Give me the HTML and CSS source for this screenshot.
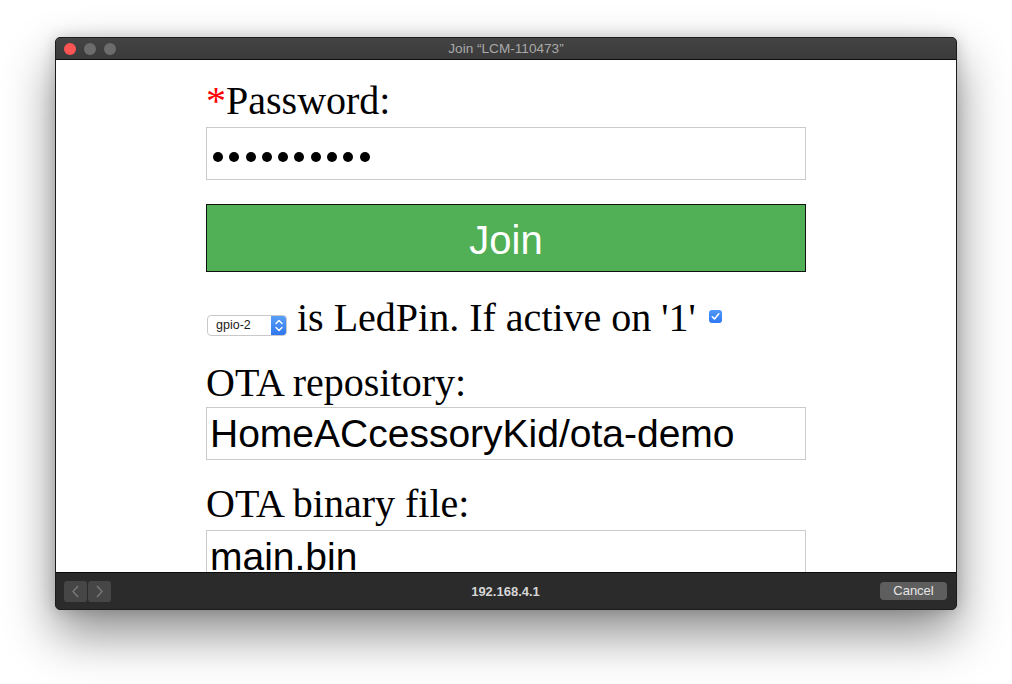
FILE: index.html
```html
<!DOCTYPE html>
<html>
<head>
<meta charset="utf-8">
<title>Join</title>
<link rel="stylesheet" href="styles.css">
</head>
<body>
<div class="window">
  <div class="titlebar">
    <div class="lights">
      <span class="light red"></span>
      <span class="light"></span>
      <span class="light"></span>
    </div>
    <div class="title">Join “LCM-110473”</div>
    <div></div>
  </div>
  <div class="viewport">
    <div class="form">
      <div class="label"><span class="req">*</span>Password:</div>
      <div class="field password">
        <span class="dot"></span><span class="dot"></span><span class="dot"></span><span class="dot"></span><span class="dot"></span><span class="dot"></span><span class="dot"></span><span class="dot"></span><span class="dot"></span><span class="dot"></span>
      </div>
      <div class="join">Join</div>
      <div class="ledrow"><span class="select"><span class="select-text">gpio-2</span><span class="select-arrow"><svg width="16" height="21" viewBox="0 0 16 21"><path d="M5 8.5 L8 5.5 L11 8.5 M5 12.5 L8 15.5 L11 12.5" fill="none" stroke="#fff" stroke-width="1.4" stroke-linecap="round" stroke-linejoin="round"/></svg></span></span> is LedPin. If active on '1' <span class="check"><svg width="13" height="13" viewBox="0 0 13 13"><path d="M3.3 6.8 L5.5 9 L9.8 3.8" fill="none" stroke="#fff" stroke-width="1.6" stroke-linecap="round" stroke-linejoin="round"/></svg></span></div>
      <div class="label gap-repo">OTA repository:</div>
      <div class="field">HomeACcessoryKid/ota-demo</div>
      <div class="label gap-bin">OTA binary file:</div>
      <div class="field">main.bin</div>
    </div>
  </div>
  <div class="bottombar">
    <div class="nav">
      <span class="navbtn"><svg width="23" height="21" viewBox="0 0 23 21"><path d="M14 5 L9 10.5 L14 16" fill="none" stroke="#7a7a7a" stroke-width="1.3"/></svg></span>
      <span class="navbtn"><svg width="23" height="21" viewBox="0 0 23 21"><path d="M9 5 L14 10.5 L9 16" fill="none" stroke="#7a7a7a" stroke-width="1.3"/></svg></span>
    </div>
    <div class="url">192.168.4.1</div>
    <div class="cancel-wrap"><span class="cancel">Cancel</span></div>
  </div>
</div>
</body>
</html>
```
FILE: styles.css
```css
html, body {
  margin: 0;
  padding: 0;
  background: #ffffff;
}
body {
  padding: 37px 0 0 55px;
  height: 684px;
  box-sizing: border-box;
  overflow: hidden;
}
.window {
  width: 902px;
  border: 1px solid #1c1c1c;
  border-radius: 5px;
  box-sizing: border-box;
  overflow: hidden;
  box-shadow: 0 24px 50px rgba(0, 0, 0, 0.45), 0 0 16px rgba(0, 0, 0, 0.18);
  background: #2b2b2b;
}
.titlebar {
  height: 21px;
  border-bottom: 1px solid #0e0e0e;
  background: linear-gradient(#444444, #3a3a3a);
  display: grid;
  grid-template-columns: 1fr auto 1fr;
  align-items: center;
}
.lights {
  display: flex;
  gap: 8px;
  padding-left: 8px;
}
.light {
  width: 12px;
  height: 12px;
  border-radius: 50%;
  background: #6c6c6c;
}
.light.red {
  background: #fd5454;
}
.title {
  font-family: "Liberation Sans", Arial, sans-serif;
  font-size: 13.6px;
  color: #a9a9a9;
}
.viewport {
  height: 512px;
  background: #ffffff;
  overflow: hidden;
  padding-top: 19px;
  box-sizing: border-box;
}
.form {
  width: 600px;
  margin: 0 auto;
}
.label, .ledrow {
  font-family: "Liberation Serif", "Times New Roman", serif;
  font-size: 40px;
  line-height: 44px;
  color: #000;
  margin-bottom: 4px;
}
.req {
  color: #fe0000;
}
.field {
  height: 53px;
  border: 1px solid #cbcbcb;
  box-sizing: border-box;
  font-family: "Liberation Sans", Arial, sans-serif;
  font-size: 39px;
  line-height: 45px;
  padding: 3px 0 0 3px;
  color: #000;
  white-space: nowrap;
}
.field.password {
  display: flex;
  align-items: center;
  gap: 6.3px;
  padding: 7px 0 0 6px;
}
.dot {
  width: 10px;
  height: 10px;
  border-radius: 50%;
  background: #000;
}
.join {
  margin-top: 24px;
  height: 68px;
  box-sizing: border-box;
  border: 1px solid #111;
  background: #51af56;
  color: #fff;
  font-family: "Liberation Sans", Arial, sans-serif;
  font-size: 40px;
  line-height: 46px;
  padding-top: 12px;
  text-align: center;
}
.ledrow {
  margin-top: 24px;
  margin-bottom: 0;
}
.select {
  display: inline-flex;
  align-items: center;
  height: 21px;
  width: 80px;
  box-sizing: border-box;
  border: 1px solid #c9c9c9;
  border-radius: 4px;
  background: #fff;
  vertical-align: 2px;
  overflow: hidden;
  margin-left: 1px;
}
.select-text {
  flex: 1;
  font-family: "Liberation Sans", Arial, sans-serif;
  font-size: 12.5px;
  line-height: 19px;
  padding-left: 8px;
  color: #1a1a1a;
}
.select-arrow {
  width: 16px;
  height: 21px;
  margin: -1px -1px -1px 0;
  background: linear-gradient(#5aa2f8, #2d74ef);
  border-radius: 0 4px 4px 0;
  display: block;
}
.select-arrow svg {
  display: block;
}
.check {
  display: inline-block;
  width: 13px;
  height: 13px;
  border-radius: 3px;
  background: linear-gradient(#4f98f8, #2f78f2);
  vertical-align: 8px;
  margin-left: 3px;
}
.check svg {
  display: block;
}
.gap-repo {
  margin-top: 21px;
  margin-bottom: 2px;
}
.gap-bin {
  margin-top: 22px;
}
.bottombar {
  height: 36px;
  border-top: 1px solid #0b0b0b;
  background: #2b2b2b;
  display: grid;
  grid-template-columns: 1fr auto 1fr;
  align-items: center;
  padding: 0 9px 0 8px;
}
.nav {
  display: flex;
  gap: 1px;
}
.navbtn {
  width: 23px;
  height: 21px;
  background: #464646;
  border-radius: 3px;
}
.navbtn svg {
  display: block;
}
.url {
  font-family: "Liberation Sans", Arial, sans-serif;
  font-size: 13px;
  color: #d6d6d6;
  font-weight: bold;
}
.cancel-wrap {
  display: flex;
  justify-content: flex-end;
}
.cancel {
  width: 67px;
  height: 18px;
  border-radius: 4px;
  background: #5e5e5e;
  color: #e6e6e6;
  font-family: "Liberation Sans", Arial, sans-serif;
  font-size: 13px;
  line-height: 18px;
  text-align: center;
}
```
